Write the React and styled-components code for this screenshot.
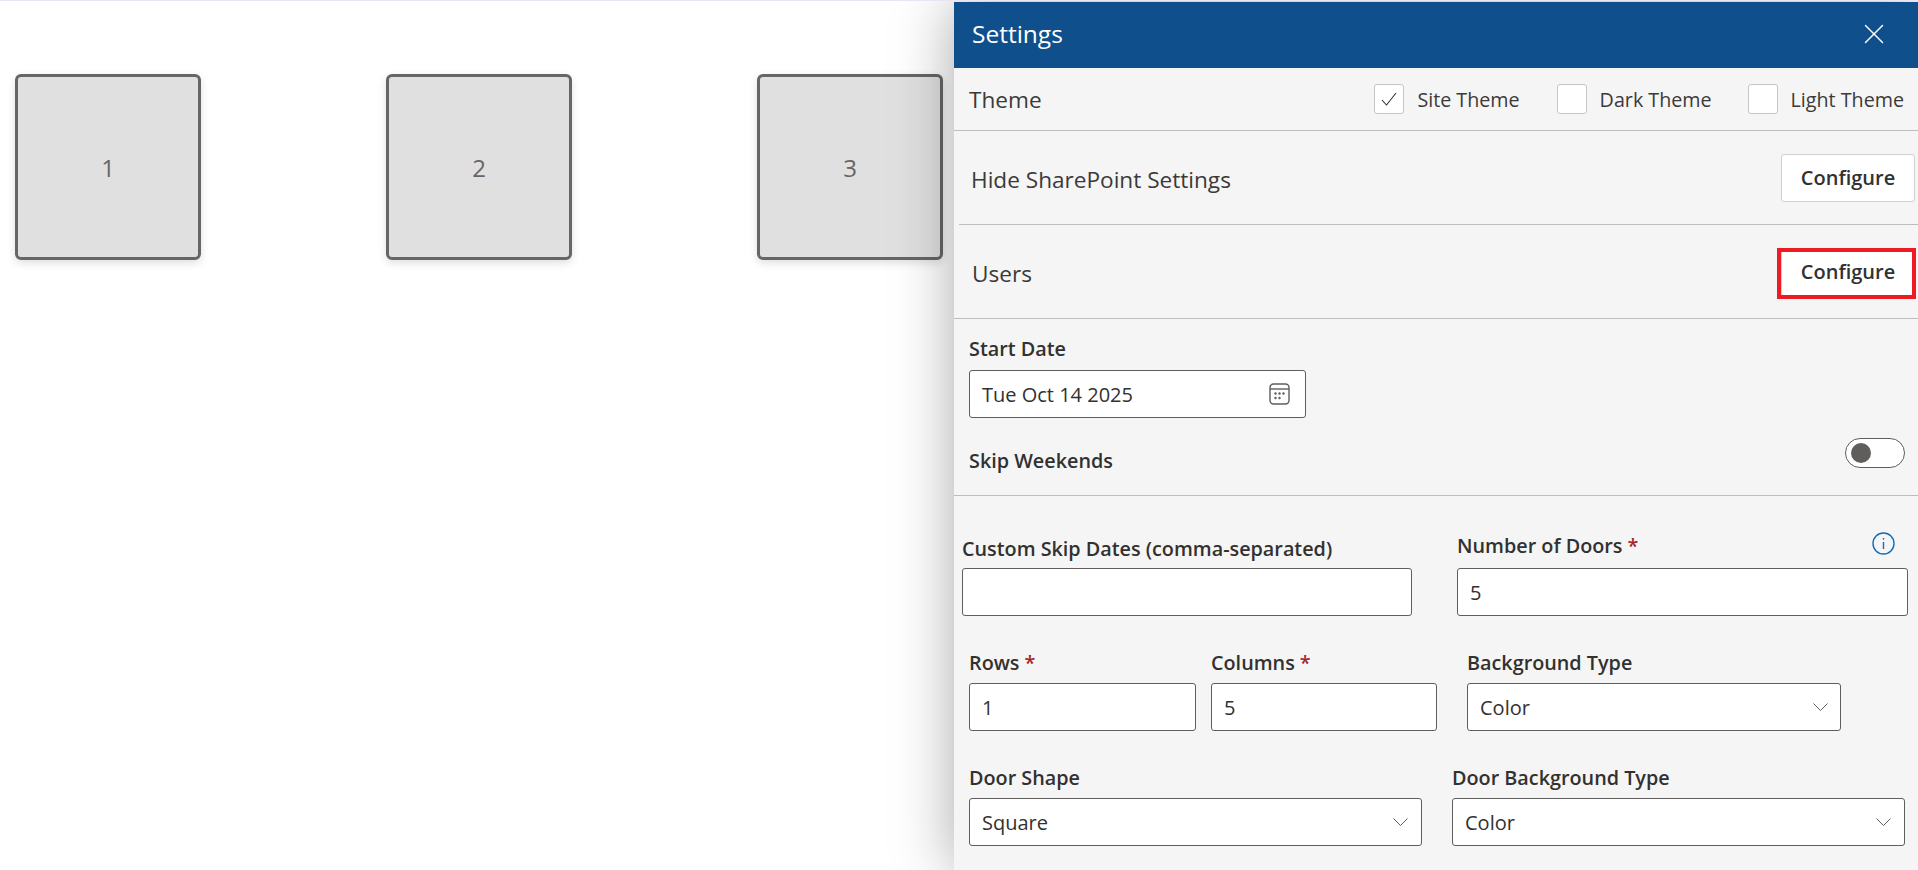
import React from 'react';
import styled, { createGlobalStyle } from 'styled-components';
import { X } from 'lucide-react';

const GlobalStyle = createGlobalStyle`
  html, body {
    margin: 0;
    padding: 0;
    background: #ffffff;
    overflow: hidden;
    font-family: "Open Sans", "Noto Sans", sans-serif;
  }
`;

const Page = styled.div`
  position: relative;
  width: 1918px;
  height: 870px;
  overflow: hidden;
  border-top: 1px solid #ece4f0;
  box-sizing: border-box;
`;

const DoorGrid = styled.div`
  display: flex;
  gap: 185px;
  padding: 73px 0 0 15px;
`;

const Door = styled.div`
  flex: none;
  width: 186px;
  height: 186px;
  box-sizing: border-box;
  display: flex;
  align-items: center;
  justify-content: center;
  background: #e0e0e0;
  border: 3px solid #666666;
  border-radius: 6px;
  box-shadow: 0 3px 8px rgba(0, 0, 0, 0.13);
  color: #666666;
  font-size: 24px;
`;

const Panel = styled.aside`
  position: absolute;
  top: 1px;
  right: 0;
  bottom: 0;
  width: 964px;
  background: #f5f5f5;
  box-shadow: 0 0 56px rgba(0, 0, 0, 0.34);
  color: #323130;
`;

const Header = styled.header`
  height: 66px;
  display: flex;
  align-items: center;
  justify-content: space-between;
  padding: 0 27px 3px 18px;
  box-sizing: border-box;
  background: #0f4f8b;
  color: #ffffff;
  font-size: 24.5px;
`;

const Row = styled.div`
  display: flex;
  align-items: center;
  justify-content: space-between;
  box-sizing: border-box;
  height: ${p => p.$height}px;
  margin-left: ${p => p.$inset || 0}px;
  padding: 0 3px 0 ${p => p.$pad}px;
  border-bottom: 1px solid #bdbdbd;
`;

const RowTitle = styled.span`
  padding-top: ${p => p.$drop || 2}px;
  font-size: 22.6px;
  color: #3b3a39;
`;

const ThemeOptions = styled.div`
  display: flex;
  align-items: center;
  padding-right: 11px;
`;

const ThemeOption = styled.div`
  display: flex;
  align-items: center;
  gap: 13px;
  margin-left: ${p => p.$offset}px;
  font-size: 19.7px;
  color: #3b3a39;
`;

const CheckBox = styled.span`
  width: 30px;
  height: 30px;
  box-sizing: border-box;
  display: flex;
  align-items: center;
  justify-content: center;
  background: #ffffff;
  border: 1px solid #c8c6c4;
  border-radius: 3px;
`;

const ConfigureButton = styled.div`
  position: relative;
  width: 134px;
  height: 48px;
  box-sizing: border-box;
  display: flex;
  align-items: center;
  justify-content: center;
  background: #ffffff;
  border: 1px solid #cfcfcf;
  border-radius: 3px;
  font-size: 20px;
  font-weight: 600;
  color: #323130;

  ${p => p.$marked && `
    &::after {
      content: '';
      position: absolute;
      top: -1px;
      left: -5px;
      right: -2px;
      bottom: -4px;
      border: 4px solid #ed1c24;
    }
  `}
`;

const Section = styled.div`
  padding: ${p => p.$top}px 0 ${p => p.$bottom}px 15px;
  border-bottom: ${p => (p.$ruled ? '1px solid #bdbdbd' : 'none')};
`;

const FieldLabel = styled.div`
  display: block;
  height: 26px;
  line-height: 24px;
  margin-bottom: ${p => p.$gap || 6}px;
  font-size: 19.8px;
  font-weight: 600;
  white-space: nowrap;
  color: #323130;
`;

const Required = styled.span`
  margin-left: 5px;
  color: #a4262c;
`;

const Field = styled.div`
  width: ${p => (p.$width ? `${p.$width}px` : '100%')};
  height: 48px;
  box-sizing: border-box;
  display: flex;
  align-items: center;
  justify-content: space-between;
  padding: 0 ${p => p.$right || 12}px 0 12px;
  background: #ffffff;
  border: 1px solid #605e5c;
  border-radius: 3px;
  font-size: 20px;
  color: #323130;
`;

const ToggleRow = styled.div`
  display: flex;
  justify-content: space-between;
  align-items: flex-start;
  margin-top: 20px;
  padding-right: 13px;
`;

const ToggleLabel = styled(FieldLabel)`
  margin: 11px 0 0;
`;

const Toggle = styled.span`
  width: 60px;
  height: 30px;
  box-sizing: border-box;
  display: flex;
  align-items: center;
  padding-left: 5px;
  background: #ffffff;
  border: 1px solid #605e5c;
  border-radius: 15px;
  &::before {
    content: '';
    width: 20px;
    height: 20px;
    border-radius: 50%;
    background: #605e5c;
  }
`;

const TwoColumns = styled.div`
  display: grid;
  grid-template-columns: 450px 451px;
  column-gap: 45px;
  align-items: end;
  padding: 38px 0 0 8px;
`;

const LabelRow = styled.div`
  display: flex;
  justify-content: space-between;
  align-items: flex-start;
  padding-right: 13px;
`;

const InfoMark = styled.svg`
  width: 23px;
  height: 23px;
  margin-top: -2px;
`;

const FieldRow = styled.div`
  display: flex;
  margin-top: 35px;
  padding-left: 15px;
`;

const FieldGroup = styled.div`
  flex: none;
  width: ${p => p.$width}px;
  margin-right: ${p => p.$after || 0}px;
`;

const CalendarIcon = () => (
  <svg width="21" height="22" viewBox="0 0 21 22" fill="none" stroke="#605e5c" strokeWidth="1.4">
    <rect x="1" y="1" width="19" height="20" rx="3.5" />
    <path d="M1 6h19" />
    <g fill="#605e5c" stroke="none">
      <circle cx="6.5" cy="10.5" r="1.2" />
      <circle cx="10.5" cy="10.5" r="1.2" />
      <circle cx="14.5" cy="10.5" r="1.2" />
      <circle cx="6.5" cy="15" r="1.2" />
      <circle cx="10.5" cy="15" r="1.2" />
    </g>
  </svg>
);

const Chevron = () => (
  <svg width="15" height="8" viewBox="0 0 15 8" fill="none" stroke="#605e5c" strokeWidth="1">
    <path d="M0.5 0.5 7.5 7.5 14.5 0.5" />
  </svg>
);

const Check = () => (
  <svg width="16" height="14" viewBox="0 0 16 14" fill="none" stroke="#323130" strokeWidth="1.1">
    <path d="M1 8l4.5 5L15 1" />
  </svg>
);

const themes = [
  { name: 'Site Theme', checked: true, offset: 0 },
  { name: 'Dark Theme', offset: 37 },
  { name: 'Light Theme', offset: 36 },
];

const App = () => (
  <Page>
    <GlobalStyle />
    <DoorGrid>
      {[1, 2, 3].map(n => (
        <Door key={n}>{n}</Door>
      ))}
    </DoorGrid>

    <Panel>
      <Header>
        Settings
        <X size={34} strokeWidth={1} />
      </Header>

      <Row $height={63} $pad={15}>
        <RowTitle $drop={1}>Theme</RowTitle>
        <ThemeOptions>
          {themes.map(t => (
            <ThemeOption key={t.name} $offset={t.offset}>
              <CheckBox>{t.checked && <Check />}</CheckBox>
              {t.name}
            </ThemeOption>
          ))}
        </ThemeOptions>
      </Row>

      <Row $height={94} $inset={5} $pad={12}>
        <RowTitle $drop={4}>Hide SharePoint Settings</RowTitle>
        <ConfigureButton>Configure</ConfigureButton>
      </Row>

      <Row $height={94} $pad={18}>
        <RowTitle $drop={4}>Users</RowTitle>
        <ConfigureButton $marked>Configure</ConfigureButton>
      </Row>

      <Section $top={18} $bottom={20} $ruled>
        <FieldLabel $gap={7}>Start Date</FieldLabel>
        <Field $width={337} $right={15}>
          Tue Oct 14 2025
          <CalendarIcon />
        </Field>
        <ToggleRow>
          <ToggleLabel>Skip Weekends</ToggleLabel>
          <Toggle />
        </ToggleRow>
      </Section>

      <TwoColumns>
        <div>
          <FieldLabel $gap={5}>Custom Skip Dates (comma-separated)</FieldLabel>
          <Field />
        </div>
        <div>
          <LabelRow>
            <FieldLabel $gap={8}>
              Number of Doors<Required>*</Required>
            </FieldLabel>
            <InfoMark viewBox="0 0 23 23" fill="none" stroke="#106ebe" strokeWidth="1.4">
              <circle cx="11.5" cy="11.5" r="10.5" />
              <path d="M11.5 10v7" />
              <circle cx="11.5" cy="6.8" r="0.9" fill="#106ebe" stroke="none" />
            </InfoMark>
          </LabelRow>
          <Field>5</Field>
        </div>
      </TwoColumns>

      <FieldRow>
        <FieldGroup $width={227} $after={15}>
          <FieldLabel>
            Rows<Required>*</Required>
          </FieldLabel>
          <Field>1</Field>
        </FieldGroup>
        <FieldGroup $width={226} $after={30}>
          <FieldLabel>
            Columns<Required>*</Required>
          </FieldLabel>
          <Field>5</Field>
        </FieldGroup>
        <FieldGroup $width={374}>
          <FieldLabel>Background Type</FieldLabel>
          <Field>
            Color
            <Chevron />
          </Field>
        </FieldGroup>
      </FieldRow>

      <FieldRow>
        <FieldGroup $width={453} $after={30}>
          <FieldLabel>Door Shape</FieldLabel>
          <Field $right={13}>
            Square
            <Chevron />
          </Field>
        </FieldGroup>
        <FieldGroup $width={453}>
          <FieldLabel>Door Background Type</FieldLabel>
          <Field $right={13}>
            Color
            <Chevron />
          </Field>
        </FieldGroup>
      </FieldRow>
    </Panel>
  </Page>
);

export default App;
